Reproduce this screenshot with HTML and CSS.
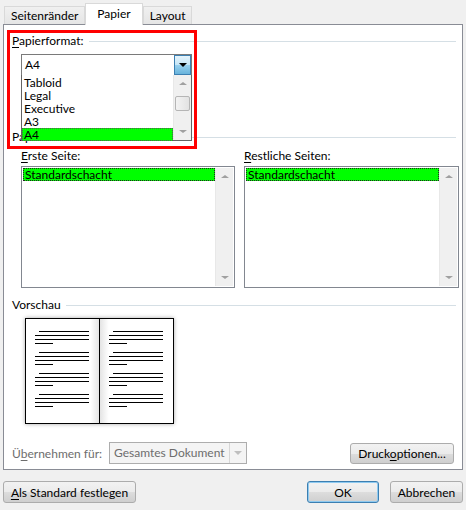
FILE: index.html
```html
<!DOCTYPE html>
<html lang="de">

<head>
    <meta charset="UTF-8">
    <title>Seite einrichten</title>
    <link rel="stylesheet" href="styles.css">
</head>

<body>
    <div class="tabs">
        <div class="tab">Seitenränder</div>
        <div class="tab active">Papier</div>
        <div class="tab">Layout</div>
    </div>

    <div class="panel">
        <div class="group-head"><span><u>P</u>apierformat:</span><div class="rule"></div></div>

        <div class="combo">
            <span class="combo-text">A4</span>
            <span class="combo-btn"><span class="tri-down"></span></span>
        </div>

        <div class="group-head second"><span>Papierzufuhr</span><div class="rule"></div></div>

        <div class="trays">
            <div class="tray">
                <div class="label"><u>E</u>rste Seite:</div>
                <div class="listbox">
                    <div class="items"><div class="item selected">Standardschacht</div></div>
                    <div class="scroll">
                        <span class="arrow-up"></span>
                        <span class="arrow-down"></span>
                    </div>
                </div>
            </div>
            <div class="tray">
                <div class="label"><u>R</u>estliche Seiten:</div>
                <div class="listbox">
                    <div class="items"><div class="item selected">Standardschacht</div></div>
                    <div class="scroll">
                        <span class="arrow-up"></span>
                        <span class="arrow-down"></span>
                    </div>
                </div>
            </div>
        </div>

        <div class="group-head preview-head"><span>Vorschau</span><div class="rule"></div></div>

        <div class="book">
            <div class="page">
                <div class="para"><i class="l1"></i><i></i><i></i><i class="l4"></i></div>
                <div class="para"><i class="l1"></i><i></i><i></i><i class="l4"></i></div>
                <div class="para"><i class="l1"></i><i></i><i></i><i class="l4"></i></div>
                <div class="para"><i class="l1"></i><i></i><i></i><i class="l4"></i></div>
            </div>
            <div class="page">
                <div class="para"><i class="l1"></i><i></i><i></i><i class="l4"></i></div>
                <div class="para"><i class="l1"></i><i></i><i></i><i class="l4"></i></div>
                <div class="para"><i class="l1"></i><i></i><i></i><i class="l4"></i></div>
                <div class="para"><i class="l1"></i><i></i><i></i><i class="l4"></i></div>
            </div>
        </div>

        <div class="apply-row">
            <span class="apply-label">Ü<u>b</u>ernehmen für:</span>
            <div class="combo disabled">
                <span class="combo-text">Gesamtes Dokument</span>
                <span class="combo-btn"><span class="tri-down"></span></span>
            </div>
            <button class="btn print">Druck<u>o</u>ptionen...</button>
        </div>

        <!-- open dropdown list and the red highlight lie over the panel -->
        <div class="droplist">
            <div class="drop-items">
                <div class="item">Tabloid</div>
                <div class="item">Legal</div>
                <div class="item">Executive</div>
                <div class="item">A3</div>
                <div class="item selected">A4</div>
            </div>
            <div class="scroll">
                <span class="arrow-up"></span>
                <span class="thumb"></span>
                <span class="arrow-down"></span>
            </div>
        </div>
        <div class="marker"></div>
    </div>

    <div class="footer">
        <button class="btn wide"><u>A</u>ls Standard festlegen</button>
        <div class="spacer"></div>
        <button class="btn ok">OK</button>
        <button class="btn cancel">Abbrechen</button>
    </div>
</body>

</html>
```

FILE: styles.css
```css
body {
    margin: 0;
    width: 466px;
    height: 510px;
    background-color: #f0f0f0;
    font-family: "Lato", "Noto Sans", sans-serif;
    font-size: 12px;
    color: #000;
    overflow: hidden;
    white-space: nowrap;
}

u {
    text-decoration-thickness: 1px;
    text-underline-offset: 2px;
}

.tabs {
    display: flex;
    align-items: flex-end;
    height: 24px;
    padding-left: 4px;
}

.tab {
    height: 17px;
    line-height: 17px;
    padding: 0 6px;
    border: 1px solid #d9d9d9;
    border-bottom: none;
    background: linear-gradient(#f0f0f0, #e5e5e5);
}

.tab.active {
    position: relative;
    height: 21px;
    line-height: 19px;
    padding: 0 11px;
    margin-bottom: -1px;
    background: #fff;
    border-color: #d9d9d9;
    z-index: 1;
}

.panel {
    position: relative;
    margin: 0 3px;
    width: 450px;
    height: 428px;
    padding: 9px 0 7px 8px;
    background: #fff;
    border: 1px solid #898c95;
}

.group-head {
    display: flex;
    align-items: center;
    height: 14px;
    line-height: 14px;
    padding-right: 6px;
}

.rule {
    flex: 1;
    height: 1px;
    margin-left: 5px;
    background: #d5dfe5;
}

.group-head.second {
    margin-top: 54px;
}

.combo {
    display: flex;
    width: 169px;
    height: 20px;
    margin: 6px 0 0 9px;
    border: 1px solid #7a7a7a;
    background: #fff;
}

.combo-text {
    flex: 1;
    line-height: 20px;
    padding-left: 3px;
}

.combo-btn {
    display: flex;
    align-items: center;
    justify-content: center;
    width: 15px;
    border: 1px solid #3c7fb1;
    background: linear-gradient(#e5f4fc, #c4e5f6 50%, #98d1ef 50%, #68b3db);
}

.tri-down {
    width: 0;
    height: 0;
    border-left: 4px solid transparent;
    border-right: 4px solid transparent;
    border-top: 4px solid #000;
}

.trays {
    display: flex;
    gap: 9px;
    margin: 5px 0 0 9px;
}

.label {
    height: 14px;
    line-height: 14px;
    margin-bottom: 3px;
}

.listbox {
    display: flex;
    width: 210px;
    height: 118px;
    border: 1px solid #828790;
    padding: 1px;
}

.tray + .tray .listbox {
    width: 211px;
}

.items {
    flex: 1;
}

.item {
    height: 13px;
    line-height: 13px;
    padding-left: 2px;
}

.item.selected {
    background: #00ff00;
}

.listbox .item.selected {
    outline: 1px dotted #222;
    outline-offset: -1px;
}

.scroll {
    position: relative;
    width: 17px;
    background: #f0f0f0;
    border-left: 1px solid #e8e8e8;
}

.arrow-up,
.arrow-down {
    position: absolute;
    left: 5px;
    width: 0;
    height: 0;
    border-left: 4px solid transparent;
    border-right: 4px solid transparent;
}

.arrow-up {
    top: 7px;
    border-bottom: 3px solid #a0a0a0;
}

.arrow-down {
    bottom: 7px;
    border-top: 3px solid #a0a0a0;
}

.preview-head {
    margin-top: 10px;
}

.book {
    display: flex;
    width: 147px;
    height: 104px;
    margin: 6px 0 0 13px;
    border: 1px solid #000;
    box-shadow: 0 0 4px rgba(0, 0, 0, 0.35);
}

.page {
    flex: 1;
    padding: 12px 0 0 9px;
    background: linear-gradient(to right, #fff 88%, #e4e4e4);
}

.page + .page {
    border-left: 1px solid #000;
    background: linear-gradient(to right, #e4e4e4, #fff 12%);
}

.para {
    display: flex;
    flex-direction: column;
    gap: 3px;
    margin-bottom: 8px;
}

.para i {
    display: block;
    width: 54px;
    height: 1px;
    background: #000;
}

.para i.l1 {
    width: 50px;
    margin-left: 4px;
}

.para i.l4 {
    width: 18px;
}

.apply-row {
    display: flex;
    align-items: center;
    margin-top: 18px;
    height: 22px;
}

.apply-label {
    width: 97px;
    color: #6d6d6d;
}

.combo.disabled {
    width: 136px;
    margin: 0;
    border-color: #adadad;
    background: #f4f4f4;
    color: #6d6d6d;
}

.combo.disabled .combo-text {
    padding-left: 4px;
}

.combo.disabled .combo-btn {
    width: 16px;
    border: none;
    border-left: 1px solid #d6d6d6;
    background: #f4f4f4;
}

.combo.disabled .tri-down {
    border-top-color: #bfbfbf;
}

.btn {
    height: 22px;
    padding: 0;
    font-family: inherit;
    font-size: 12px;
    color: #000;
    border: 1px solid #acacac;
    border-radius: 3px;
    background: linear-gradient(#f2f2f2, #ebebeb 50%, #dddddd 50%, #cfcfcf);
}

.btn.print {
    width: 104px;
    height: 21px;
    margin-left: auto;
    margin-right: 8px;
}

.droplist {
    position: absolute;
    left: 17px;
    top: 50px;
    width: 169px;
    height: 65px;
    display: flex;
    border: 1px solid #646464;
    border-top: none;
    background: #fff;
}

.drop-items {
    flex: 1;
    padding-top: 1px;
}

.droplist .item.selected {
    outline: 1px dotted #555;
    outline-offset: -1px;
}

.thumb {
    position: absolute;
    top: 21px;
    left: 1px;
    width: 13px;
    height: 13px;
    border: 1px solid #b5b5b5;
    border-radius: 2px;
    background: linear-gradient(to right, #f3f3f3, #e2e2e2);
}

.marker {
    position: absolute;
    left: 3px;
    top: 5px;
    width: 184px;
    height: 113px;
    border: 3px solid #ff0000;
    pointer-events: none;
}

.footer {
    display: flex;
    margin-top: 11px;
    padding: 0 3px;
    gap: 11px;
}

.btn.wide {
    width: 133px;
}

.spacer {
    flex: 1;
}

.btn.ok {
    width: 72px;
    border-color: #3c7fb1;
    box-shadow: inset 0 0 0 1px #8fcaf0;
}

.btn.cancel {
    width: 73px;
}
```
